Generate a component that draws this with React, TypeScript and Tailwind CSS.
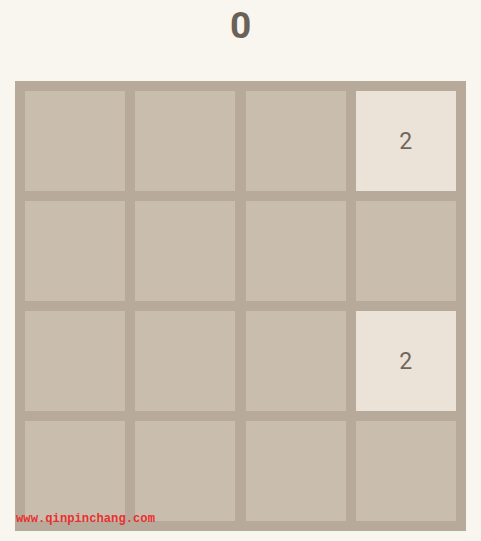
import React from 'react';

// 4x4 board, 0 = empty cell
const board: number[][] = [
  [0, 0, 0, 2],
  [0, 0, 0, 0],
  [0, 0, 0, 2],
  [0, 0, 0, 0],
];

const Tile: React.FC<{ value: number }> = ({ value }) => (
  <div
    className={
      value
        ? 'w-[100px] h-[100px] flex items-center justify-center bg-[#ebe2d8] text-[#6f665e] text-[23px] pt-[2px]'
        : 'w-[100px] h-[100px] bg-[#c9bdae]'
    }
  >
    {value ? value : null}
  </div>
);

export default function App() {
  const score = 0;

  return (
    <div
      className="relative w-[481px] h-[541px] bg-[#f9f6ef] pl-[15px] pt-[6px]"
      style={{ fontFamily: 'Roboto, "Liberation Sans", sans-serif' }}
    >
      <div className="w-[451px] h-[75px] flex justify-center">
        <span className="text-[37px] leading-[40px] font-bold text-[#6a6257]">{score}</span>
      </div>

      <div className="w-[451px] h-[450px] bg-[#b8aa9b] p-[10px] grid grid-cols-4 gap-[10px]">
        {board.flat().map((v, i) => (
          <Tile key={i} value={v} />
        ))}
      </div>

      {/* site stamp */}
      <span
        className="absolute left-[16px] top-[511px] text-[12.2px] leading-[16px] font-bold text-[#e8302f]"
        style={{ fontFamily: '"Liberation Mono", monospace' }}
      >
        www.qinpinchang.com
      </span>
    </div>
  );
}
